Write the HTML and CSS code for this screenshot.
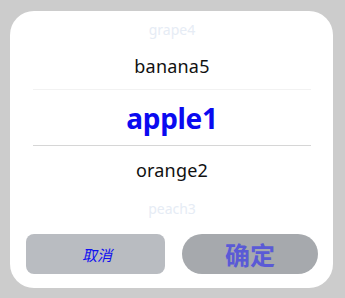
FILE: index.html
```html
<!DOCTYPE html>
<html>
<head>
<meta charset="utf-8">
<link rel="stylesheet" href="styles.css">
</head>
<body>
<div class="dialog">
  <div class="picker">
    <div class="row row-far row-top"><span>grape4</span></div>
    <div class="row row-near row-banana"><span>banana5</span></div>
    <div class="row row-selected"><span>apple1</span></div>
    <div class="row row-near row-orange"><span>orange2</span></div>
    <div class="row row-far row-bottom"><span>peach3</span></div>
  </div>
  <div class="actions">
    <button class="btn btn-cancel">取消</button>
    <button class="btn btn-ok">确定</button>
  </div>
</div>
</body>
</html>
```

FILE: styles.css
```css
html, body {
  margin: 0;
  padding: 0;
  background: #cccccc;
}
body {
  width: 345px;
  height: 298px;
  padding: 11px 10px 0 10px;
  box-sizing: border-box;
  font-family: "Noto Sans", "Noto Sans CJK SC", sans-serif;
}
.dialog {
  width: 323px;
  height: 277px;
  background: #ffffff;
  border-radius: 24px;
  box-sizing: border-box;
  padding: 0 15px 15px 16px;
  display: flex;
  flex-direction: column;
}
.picker {
  display: flex;
  flex-direction: column;
  align-items: stretch;
  margin: 0 7px;
}
.row {
  display: flex;
  align-items: center;
  justify-content: center;
  white-space: nowrap;
}
.row-far {
  color: #e6ecf5;
  font-size: 14px;
}
.row-top {
  height: 31px;
  padding-top: 5px;
  box-sizing: border-box;
}
.row-bottom {
  height: 32px;
  padding-bottom: 2px;
  box-sizing: border-box;
}
.row-near {
  color: #111111;
  font-size: 18px;
  height: 48px;
  letter-spacing: 0.2px;
}
.row-banana {
  border-bottom: 1px solid #f2f2f2;
  height: 48px;
  padding-top: 1px;
  box-sizing: border-box;
}
.row-orange {
  border-top: 1px solid #d6d6d6;
  padding-top: 0;
  box-sizing: border-box;
}
.row-selected {
  height: 55px;
  color: #0a0af0;
  font-size: 28px;
  font-weight: 700;
  letter-spacing: -0.3px;
}
.actions {
  margin-top: 9px;
  display: flex;
  gap: 17px;
}
.btn {
  flex: 1;
  height: 40px;
  border: none;
  padding: 0;
  display: flex;
  align-items: center;
  justify-content: center;
  font-family: "Noto Sans CJK SC", sans-serif;
}
.btn-cancel {
  background: #b9bcc1;
  border-radius: 8px;
  color: #1010f0;
  font-size: 15px;
  font-style: italic;
  padding-left: 3px;
}
.btn-ok {
  background: #a6a9ad;
  border-radius: 20px;
  color: #5a5ad6;
  font-size: 25px;
  font-weight: 700;
}
```
